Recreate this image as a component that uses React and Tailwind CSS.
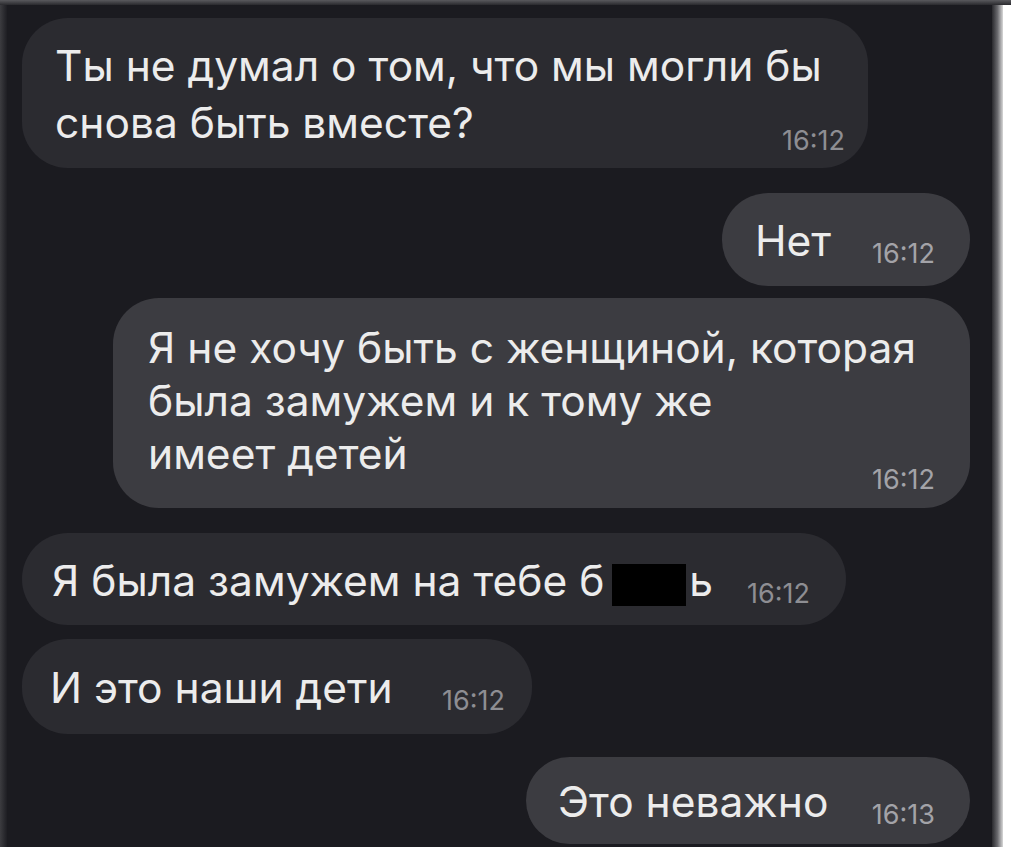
import React from 'react';

const FONT = "font-['Inter','Roboto','Liberation_Sans',sans-serif]";

// incoming bubbles are darker, outgoing a bit lighter
const Bubble = ({ out, className = '', children }) => (
  <div
    className={`rounded-[46px] ${out ? 'bg-[#3c3c41] self-end' : 'bg-[#2b2b30] self-start'} ${className}`}
  >
    {children}
  </div>
);

const Time = ({ t, out, className = '' }) => (
  <span
    className={`text-[27px] leading-[24px] whitespace-nowrap ${out ? 'text-[#a3a3a8]' : 'text-[#8e8e93]'} ${className}`}
  >
    {t}
  </span>
);

const Single = ({ text, t, out, className }) => (
  <Bubble out={out} className={`flex items-end justify-between ${className}`}>
    <span className="text-[42.5px] leading-[56px] whitespace-nowrap">{text}</span>
    <Time t={t} out={out} className="mb-[3px]" />
  </Bubble>
);

export default function App() {
  return (
    <div className={`w-[1011px] h-[847px] overflow-hidden flex flex-col bg-white ${FONT}`}>
      {/* top edge of the photographed screen */}
      <div className="h-[5px] bg-gradient-to-b from-[#5a5a5e] to-[#2a2a2e]" />
      <div className="flex flex-1 min-h-0">
        <div className="w-[7px] bg-gradient-to-r from-[#3c3c40] to-[#1e1e23]" />

        <div className="flex-1 bg-[#1b1b20] text-[#ececec] flex flex-col pl-[15px] pr-[22px] pt-[13px]">
          <Bubble className="w-[846px] pt-[19px] pb-[17px] pl-[33px] pr-[23px] grid">
            <div className="col-start-1 row-start-1 text-[42.5px] leading-[57px]">
              Ты не думал о том, что мы могли бы
              <br />
              снова быть вместе?
            </div>
            <Time t="16:12" className="col-start-1 row-start-1 self-end justify-self-end mb-[-2px]" />
          </Bubble>

          <Single out text="Нет" t="16:12" className="mt-[25px] w-[248px] pt-[20px] pb-[17px] pl-[33px] pr-[35px]" />

          <Bubble out className="mt-[12px] w-[857px] pt-[23px] pb-[16px] pl-[35px] pr-[35px] grid">
            <div className="col-start-1 row-start-1 text-[42.5px] leading-[53px] pb-[12px]">
              Я не хочу быть с женщиной, которая
              <br />
              была замужем и к тому же
              <br />
              имеет детей
            </div>
            <Time out t="16:12" className="col-start-1 row-start-1 self-end justify-self-end" />
          </Bubble>

          <Bubble className="mt-[25px] w-[824px] pt-[20px] pb-[16px] pl-[30px] pr-[36px] flex items-end justify-between">
            <span className="text-[42.5px] leading-[56px] whitespace-nowrap">
              Я была замужем на тебе б
              <span className="inline-block align-[-10px] w-[74px] h-[42px] bg-black ml-[8px] mr-[3px]" />
              ь
            </span>
            <Time t="16:12" className="mb-[3px]" />
          </Bubble>

          <Single text="И это наши дети" t="16:12" className="mt-[14px] w-[510px] pt-[21px] pb-[18px] pl-[28px] pr-[27px]" />

          <Single out text="Это неважно" t="16:13" className="mt-[23px] w-[444px] pt-[17px] pb-[14px] pl-[32px] pr-[35px]" />
        </div>

        <div className="w-[11px] bg-gradient-to-r from-[#2a2a2e] via-[#6a6a6e] to-[#d8d8d8]" />
        <div className="w-[8px] bg-white" />
      </div>
    </div>
  );
}
